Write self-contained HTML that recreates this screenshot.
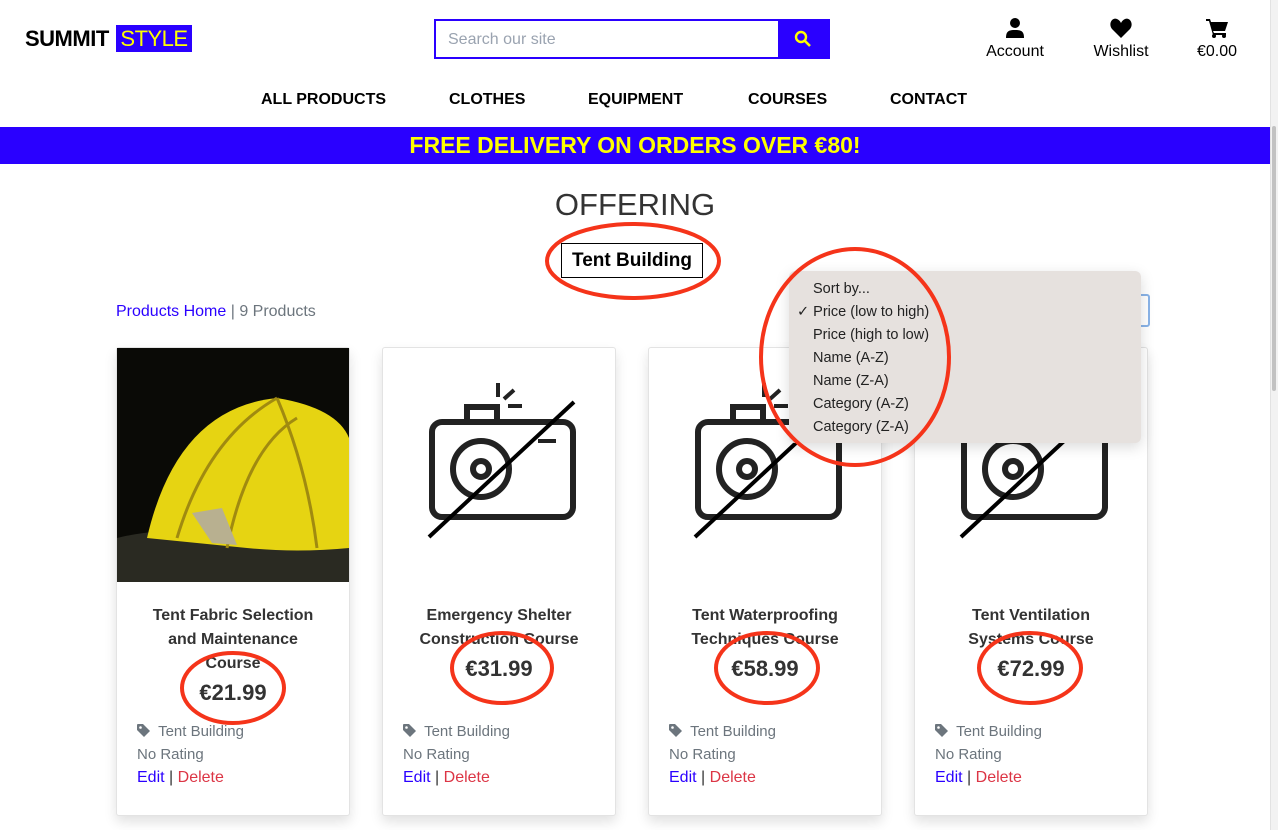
<!DOCTYPE html>
<html><head><meta charset="utf-8"><style>
*{box-sizing:border-box;margin:0;padding:0}
body{width:1278px;height:830px;overflow:hidden;background:#fff;font-family:"Liberation Sans",sans-serif;position:relative;color:#333}
.abs{position:absolute}
.logo{left:25px;top:26px;font-weight:bold;font-size:22px;color:#000;letter-spacing:-0.5px}
.logo span{background:#2a00ff;color:#ffff00;font-weight:normal;padding:1px 4px;margin-left:2px}
.search{left:434px;top:19px;width:396px;height:40px;border:2px solid #2a00ff;display:flex}
.search div{flex:1;color:#9aa3b0;font-size:16px;line-height:38px;padding-left:12px}
.search b{width:50px;background:#2a00ff;display:flex;align-items:center;justify-content:center}
.ic{text-align:center;font-size:16px;color:#000;top:18px}
.nav{top:91px;font-weight:bold;font-size:16px;color:#000}
.banner{left:0;top:127px;width:1270px;height:37px;background:#2a00ff;color:#ffff00;font-size:23px;font-weight:bold;text-align:center;line-height:37px}
.card{width:234px;height:469px;top:347px;border:1px solid #e3e3e3;border-radius:3px;box-shadow:0 6px 12px rgba(0,0,0,.12);background:#fff}
.t{position:absolute;left:0;width:232px;text-align:center;font-weight:bold;font-size:16px;line-height:24px;color:#333}
.p{position:absolute;left:0;width:232px;text-align:center;font-weight:bold;font-size:22px;color:#333}
.m{position:absolute;left:20px;font-size:15px;color:#6c757d}
.e{position:absolute;left:20px;font-size:16px}
.e a{color:#2a00ff}.e i{font-style:normal;color:#dc3545}
.dd{left:789px;top:271px;width:352px;height:172px;background:#e6e1de;border-radius:6px;box-shadow:0 4px 14px rgba(0,0,0,.15);font-size:14.5px;color:#222}
.dd div{position:absolute;left:24px}
</style></head><body>
<div class="abs logo">SUMMIT <span>STYLE</span></div>
<div class="abs search"><div>Search our site</div><b><svg width="18" height="18" viewBox="0 0 18 18"><circle cx="7" cy="7" r="5" fill="none" stroke="#ff0" stroke-width="2.4"/><path d="M11 11l5 5" stroke="#ff0" stroke-width="2.6"/></svg></b></div>
<div class="abs ic" style="left:980px;width:70px"><svg width="18" height="20" viewBox="0 0 18 20"><circle cx="9" cy="5" r="5"/><path d="M0 20c0-7 3-8 9-8s9 1 9 8z"/></svg><div>Account</div></div>
<div class="abs ic" style="left:1086px;width:70px"><svg width="22" height="20" viewBox="0 0 22 20"><path d="M11 20L2 11C-2 6 2-1 7 1c2 1 3 2 4 4 1-2 2-3 4-4 5-2 9 5 5 10z"/></svg><div>Wishlist</div></div>
<div class="abs ic" style="left:1182px;width:70px"><svg width="22" height="20" viewBox="0 0 22 20"><path d="M0 1h4l1 3h17l-3 9H7l1 2h12v2H7L3 3H0z"/><circle cx="8" cy="18" r="2"/><circle cx="18" cy="18" r="2"/></svg><div>€0.00</div></div>
<div class="abs nav" style="left:261px">ALL PRODUCTS</div>
<div class="abs nav" style="left:449px">CLOTHES</div>
<div class="abs nav" style="left:588px">EQUIPMENT</div>
<div class="abs nav" style="left:748px">COURSES</div>
<div class="abs nav" style="left:890px">CONTACT</div>
<div class="abs banner">FREE DELIVERY ON ORDERS OVER €80!</div>
<div class="abs" style="left:1270px;top:0;width:8px;height:830px;background:#f2f2f2;border-left:1px solid #e2e2e2"></div>
<div class="abs" style="left:1272px;top:126px;width:4px;height:265px;background:#c2c2c2;border-radius:2px"></div>
<div class="abs" style="left:0;width:1270px;top:187px;text-align:center;font-size:31px;color:#333">OFFERING</div>
<div class="abs" style="left:561px;top:243px;width:142px;height:35px;border:1px solid #000;text-align:center;line-height:33px;font-weight:bold;font-size:19px;color:#000">Tent Building</div>
<div class="abs" style="left:116px;top:303px;font-size:16px;color:#6c757d"><span style="color:#2a00ff">Products Home</span> | 9 Products</div>
<div class="abs" style="left:900px;top:294px;width:250px;height:33px;border:2px solid #8ab4e8;border-radius:3px"></div>

<div class="abs card" style="left:116px"><svg width="232" height="234" viewBox="0 0 232 234" style="display:block"><rect width="232" height="234" fill="#0a0a06"/><path d="M0 190 Q80 170 232 200 V234 H0z" fill="#2a2a22"/><path d="M30 190 Q60 60 160 50 Q220 60 232 90 V200 Q180 205 130 200 Q80 195 30 190z" fill="#e6d412"/><path d="M60 190 Q90 90 160 50 M110 200 Q130 100 180 70 M160 50 Q190 120 200 200" stroke="#a08a10" stroke-width="3" fill="none"/><path d="M75 165 L95 195 L120 197 L105 160z" fill="#b8b090"/></svg>
<div class="t" style="top:256px">Tent Fabric Selection<br>and Maintenance<br>Course</div><div class="p" style="top:332px">€21.99</div>
<div class="m" style="top:375px"><svg width="13" height="13" viewBox="0 0 13 13" style="vertical-align:-1px"><path d="M0 1a1 1 0 011-1h5l7 7-6 6-7-7z" fill="#6c757d"/><circle cx="3.5" cy="3.5" r="1.3" fill="#fff"/></svg>&nbsp; Tent Building</div><div class="m" style="top:398px">No Rating</div><div class="e" style="top:421px"><a>Edit</a> <span style="color:#333">|</span> <i>Delete</i></div></div>

<div class="abs card" style="left:382px"><svg width="232" height="234"><g transform="translate(-381,-347)" fill="none" stroke="#222" stroke-width="6"><rect x="430" y="421" width="141" height="95" rx="10"/><rect x="465" y="406" width="30" height="15"/><circle cx="479" cy="468" r="28"/><circle cx="479" cy="468" r="8"/><path d="M536 440h18M496 382v14M502 398l10-9M506 405h14" stroke-width="4"/><path d="M427 536L572 401" stroke="#000" stroke-width="4"/></g></svg>
<div class="t" style="top:256px">Emergency Shelter<br>Construction Course</div><div class="p" style="top:308px">€31.99</div>
<div class="m" style="top:375px"><svg width="13" height="13" viewBox="0 0 13 13" style="vertical-align:-1px"><path d="M0 1a1 1 0 011-1h5l7 7-6 6-7-7z" fill="#6c757d"/><circle cx="3.5" cy="3.5" r="1.3" fill="#fff"/></svg>&nbsp; Tent Building</div><div class="m" style="top:398px">No Rating</div><div class="e" style="top:421px"><a>Edit</a> <span style="color:#333">|</span> <i>Delete</i></div></div>

<div class="abs card" style="left:648px"><svg width="232" height="234"><g transform="translate(-381,-347)" fill="none" stroke="#222" stroke-width="6"><rect x="430" y="421" width="141" height="95" rx="10"/><rect x="465" y="406" width="30" height="15"/><circle cx="479" cy="468" r="28"/><circle cx="479" cy="468" r="8"/><path d="M536 440h18M496 382v14M502 398l10-9M506 405h14" stroke-width="4"/><path d="M427 536L572 401" stroke="#000" stroke-width="4"/></g></svg>
<div class="t" style="top:256px">Tent Waterproofing<br>Techniques Course</div><div class="p" style="top:308px">€58.99</div>
<div class="m" style="top:375px"><svg width="13" height="13" viewBox="0 0 13 13" style="vertical-align:-1px"><path d="M0 1a1 1 0 011-1h5l7 7-6 6-7-7z" fill="#6c757d"/><circle cx="3.5" cy="3.5" r="1.3" fill="#fff"/></svg>&nbsp; Tent Building</div><div class="m" style="top:398px">No Rating</div><div class="e" style="top:421px"><a>Edit</a> <span style="color:#333">|</span> <i>Delete</i></div></div>

<div class="abs card" style="left:914px"><svg width="232" height="234"><g transform="translate(-381,-347)" fill="none" stroke="#222" stroke-width="6"><rect x="430" y="421" width="141" height="95" rx="10"/><rect x="465" y="406" width="30" height="15"/><circle cx="479" cy="468" r="28"/><circle cx="479" cy="468" r="8"/><path d="M536 440h18M496 382v14M502 398l10-9M506 405h14" stroke-width="4"/><path d="M427 536L572 401" stroke="#000" stroke-width="4"/></g></svg>
<div class="t" style="top:256px">Tent Ventilation<br>Systems Course</div><div class="p" style="top:308px">€72.99</div>
<div class="m" style="top:375px"><svg width="13" height="13" viewBox="0 0 13 13" style="vertical-align:-1px"><path d="M0 1a1 1 0 011-1h5l7 7-6 6-7-7z" fill="#6c757d"/><circle cx="3.5" cy="3.5" r="1.3" fill="#fff"/></svg>&nbsp; Tent Building</div><div class="m" style="top:398px">No Rating</div><div class="e" style="top:421px"><a>Edit</a> <span style="color:#333">|</span> <i>Delete</i></div></div>

<div class="abs dd">
<div style="top:10px">Sort by...</div>
<div style="top:33px;left:8px">✓ Price (low to high)</div>
<div style="top:56px">Price (high to low)</div>
<div style="top:79px">Name (A-Z)</div>
<div style="top:102px">Name (Z-A)</div>
<div style="top:125px">Category (A-Z)</div>
<div style="top:148px">Category (Z-A)</div>
</div>
<svg class="abs" style="left:0;top:0" width="1278" height="830" fill="none" stroke="#f5341a" stroke-width="4">
<ellipse cx="633" cy="261" rx="86" ry="37"/>
<ellipse cx="855" cy="357" rx="94" ry="108"/>
<ellipse cx="233" cy="688" rx="51" ry="35"/>
<ellipse cx="502" cy="668" rx="50" ry="35"/>
<ellipse cx="767" cy="668" rx="51" ry="35"/>
<ellipse cx="1030" cy="668" rx="51" ry="35"/>
</svg>
</body></html>
